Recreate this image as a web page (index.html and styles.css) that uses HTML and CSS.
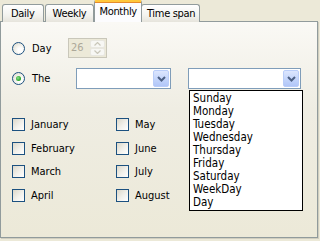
FILE: index.html
```html
<!DOCTYPE html>
<html>
<head>
<meta charset="utf-8">
<link rel="stylesheet" href="styles.css">
</head>
<body>
<div class="tabs">
  <div class="tab tab-first">Daily</div>
  <div class="tab">Weekly</div>
  <div class="tab active">Monthly</div>
  <div class="tab tab-last">Time span</div>
</div>
<div class="panel">
  <div class="row row-day">
    <span class="radio"></span>
    <span class="label">Day</span>
    <div class="spin">
      <span class="spin-val">26</span>
      <span class="spin-btns">
        <span class="spin-btn"><svg width="7" height="4" viewBox="0 0 7 4"><path d="M0.5 3.5 L3.5 0.5 L6.5 3.5" fill="none" stroke="#C9C7BA" stroke-width="1.2"/></svg></span>
        <span class="spin-btn"><svg width="7" height="4" viewBox="0 0 7 4"><path d="M0.5 0.5 L3.5 3.5 L6.5 0.5" fill="none" stroke="#C9C7BA" stroke-width="1.2"/></svg></span>
      </span>
    </div>
  </div>
  <div class="row row-the">
    <span class="radio checked"><span class="dot"></span></span>
    <span class="label">The</span>
    <div class="combo combo1">
      <span class="combo-text"></span>
      <span class="combo-btn"><svg width="9" height="6" viewBox="0 0 9 6"><path d="M1 1 L4.5 4.5 L8 1" fill="none" stroke="#4D6185" stroke-width="2"/></svg></span>
    </div>
    <div class="combo combo2">
      <span class="combo-text"></span>
      <span class="combo-btn"><svg width="9" height="6" viewBox="0 0 9 6"><path d="M1 1 L4.5 4.5 L8 1" fill="none" stroke="#4D6185" stroke-width="2"/></svg></span>
    </div>
  </div>
  <div class="months">
    <div class="check-item"><span class="box"></span><span>January</span></div>
    <div class="check-item"><span class="box"></span><span>May</span></div>
    <div class="check-item"><span class="box"></span><span>February</span></div>
    <div class="check-item"><span class="box"></span><span>June</span></div>
    <div class="check-item"><span class="box"></span><span>March</span></div>
    <div class="check-item"><span class="box"></span><span>July</span></div>
    <div class="check-item"><span class="box"></span><span>April</span></div>
    <div class="check-item"><span class="box"></span><span>August</span></div>
  </div>
  <ul class="dropdown">
    <li>Sunday</li>
    <li>Monday</li>
    <li>Tuesday</li>
    <li>Wednesday</li>
    <li>Thursday</li>
    <li>Friday</li>
    <li>Saturday</li>
    <li>WeekDay</li>
    <li>Day</li>
  </ul>
</div>
</body>
</html>
```
FILE: styles.css
```css
html, body {
  margin: 0;
  padding: 0;
}
body {
  width: 320px;
  height: 241px;
  background: #ECE9D8;
  font-family: "DejaVu Sans Condensed", "DejaVu Sans", sans-serif;
  font-size: 11px;
  color: #000;
  overflow: hidden;
  position: relative;
}
.tabs {
  display: flex;
  align-items: flex-end;
  height: 21px;
  padding-left: 2px;
  position: relative;
  z-index: 2;
}
.tab {
  height: 17px;
  line-height: 17px;
  padding: 0 7px;
  letter-spacing: -0.3px;
  margin-bottom: -1px;
  border: 1px solid #919B9C;
  border-bottom: none;
  border-radius: 3px 3px 0 0;
  background: linear-gradient(#FFFFFF, #F3F3EF 60%, #E6E4DC);
  margin-right: 1px;
}
.tab-first {
  padding: 0 8px;
}
.tab.active {
  height: 20px;
  line-height: 19px;
  margin-right: 0;
  margin-left: -1px;
  padding: 0 4px;
  border-top: 2px solid #FFC73C;
  border-radius: 2px 2px 0 0;
  background: #FCFCFE;
  box-shadow: inset 0 1px 0 #E68B2C;
}
.tab-last {
  margin-left: -1px;
  padding: 0 4px 0 5px;
}
.panel {
  position: relative;
  width: 305px;
  height: 215px;
  border: 1px solid #919B9C;
  background: linear-gradient(#FAF9F5, #EFEDE3 40%, #ECE9D8);
  padding: 0 0 0 11px;
  box-shadow: 1px 1px 0 #D0CEBF;
}
.row {
  display: flex;
  align-items: center;
}
.row-day {
  margin-top: 16px;
  height: 20px;
}
.row-the {
  margin-top: 10px;
  height: 21px;
}
.radio {
  width: 13px;
  height: 13px;
  box-sizing: border-box;
  border: 1px solid #1C5180;
  border-radius: 50%;
  background: radial-gradient(circle at 65% 65%, #FFFFFF 20%, #E8E6DC 70%, #D6D2C2);
  display: flex;
  align-items: center;
  justify-content: center;
  flex: none;
}
.dot {
  width: 5px;
  height: 5px;
  border-radius: 50%;
  background: radial-gradient(circle at 40% 40%, #8CE08C, #21A121 70%);
}
.label {
  margin-left: 7px;
  width: 36px;
}
.row-the .label {
  width: 44px;
}
.spin {
  display: flex;
  width: 39px;
  height: 20px;
  box-sizing: border-box;
  border: 1px solid #C9C7BA;
  background: #ECE9D8;
}
.spin-val {
  flex: 1;
  color: #ACA899;
  padding-left: 2px;
  line-height: 18px;
}
.spin-btns {
  display: flex;
  flex-direction: column;
  width: 15px;
  margin: 1px 1px 1px 0;
}
.spin-btn {
  flex: 1;
  display: flex;
  align-items: center;
  justify-content: center;
  background: #F7F7F4;
  border: 1px solid #E8E7E0;
  border-radius: 2px;
}
.combo {
  display: flex;
  height: 21px;
  box-sizing: border-box;
  border: 1px solid #7F9DB9;
  background: #FFFFFF;
}
.combo1 {
  width: 95px;
}
.combo2 {
  width: 113px;
  margin-left: 17px;
}
.combo-text {
  flex: 1;
}
.combo-btn {
  width: 16px;
  margin: 1px;
  box-sizing: border-box;
  border-radius: 2px;
  border: 1px solid #B9CDF9;
  background: linear-gradient(#DCE6FE, #C1D3FB 60%, #B1C6F8);
  display: flex;
  align-items: center;
  justify-content: center;
}
.months {
  display: grid;
  grid-template-columns: 104px 80px;
  grid-auto-rows: 23.7px;
  margin-top: 29px;
}
.check-item {
  display: flex;
  align-items: center;
  height: 13px;
}
.box {
  width: 13px;
  height: 13px;
  box-sizing: border-box;
  border: 1px solid #1C5180;
  background: linear-gradient(135deg, #DCD8CA, #F2F1EC 55%, #FFFFFF);
  margin-right: 6px;
  flex: none;
}
.dropdown {
  position: absolute;
  left: 188px;
  top: 68px;
  width: 114px;
  height: 121px;
  box-sizing: border-box;
  margin: 0;
  padding: 1px 0 0 3px;
  list-style: none;
  background: #FFFFFF;
  border: 1px solid #000000;
  z-index: 3;
}
.dropdown li {
  height: 13px;
  line-height: 13px;
  font-size: 11.5px;
}
```
